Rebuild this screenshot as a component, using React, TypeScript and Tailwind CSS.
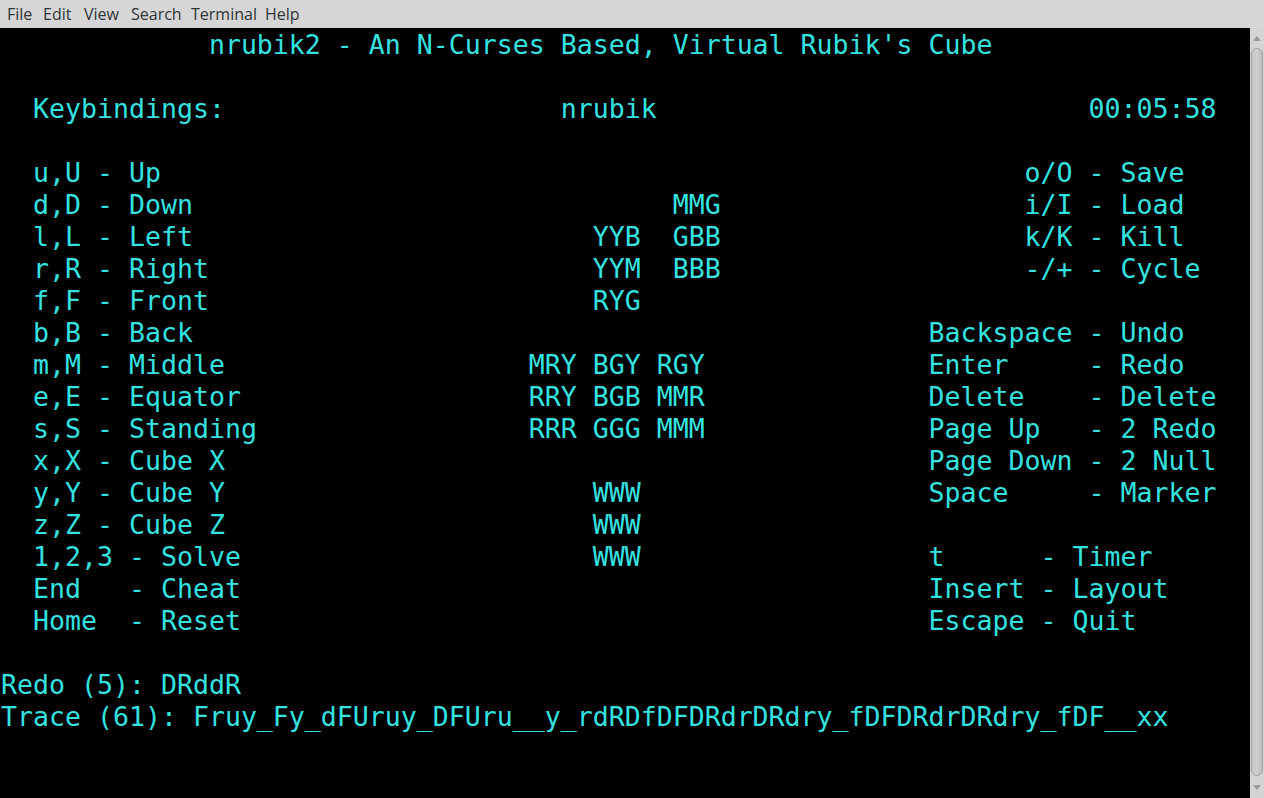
import React from "react";

function pad(s: string, col: number) {
  return s.length >= col ? s : s + " ".repeat(col - s.length);
}

type Seg = [number, string];
function line(...segs: Seg[]) {
  let s = "";
  for (const [c, t] of segs) {
    s = pad(s, c) + t;
  }
  return s;
}

const lines: string[] = [
  line([13, "nrubik2 - An N-Curses Based, Virtual Rubik's Cube"]),
  "",
  line([2, "Keybindings:"], [35, "nrubik"], [68, "00:05:58"]),
  "",
  line([2, "u,U - Up"], [64, "o/O - Save"]),
  line([2, "d,D - Down"], [42, "MMG"], [64, "i/I - Load"]),
  line([2, "l,L - Left"], [37, "YYB  GBB"], [64, "k/K - Kill"]),
  line([2, "r,R - Right"], [37, "YYM  BBB"], [64, "-/+ - Cycle"]),
  line([2, "f,F - Front"], [37, "RYG"]),
  line([2, "b,B - Back"], [58, "Backspace - Undo"]),
  line([2, "m,M - Middle"], [33, "MRY BGY RGY"], [58, "Enter     - Redo"]),
  line([2, "e,E - Equator"], [33, "RRY BGB MMR"], [58, "Delete    - Delete"]),
  line([2, "s,S - Standing"], [33, "RRR GGG MMM"], [58, "Page Up   - 2 Redo"]),
  line([2, "x,X - Cube X"], [58, "Page Down - 2 Null"]),
  line([2, "y,Y - Cube Y"], [37, "WWW"], [58, "Space     - Marker"]),
  line([2, "z,Z - Cube Z"], [37, "WWW"]),
  line([2, "1,2,3 - Solve"], [37, "WWW"], [58, "t      - Timer"]),
  line([2, "End   - Cheat"], [58, "Insert - Layout"]),
  line([2, "Home  - Reset"], [58, "Escape - Quit"]),
  "",
  "Redo (5): DRddR",
  "Trace (61): Fruy_Fy_dFUruy_DFUru__y_rdRDfDFDRdrDRdry_fDFDRdrDRdry_fDF__xx",
];

const menus: [string, string][] = [
  ["File", "w-[36px]"],
  ["Edit", "w-[41px]"],
  ["View", "w-[47px]"],
  ["Search", "w-[60px]"],
  ["Terminal", "w-[74px]"],
  ["Help", "w-[40px]"],
];

export default function App() {
  return (
    <div className="w-[1264px] h-[798px] flex flex-col overflow-hidden bg-black">
      <div
        className="h-[28px] bg-[#d6d6d6] flex items-center pl-[7px] text-[16px] text-[#2e3436]"
        style={{ fontFamily: '"Open Sans", "Noto Sans", sans-serif' }}
      >
        {menus.map(([m, w]) => (
          <span key={m} className={w}>
            {m}
          </span>
        ))}
      </div>
      <div className="flex flex-1 min-h-0">
        <pre
          className="flex-1 m-0 pl-[1px] pt-[1px] text-[26.576px] leading-[32px] text-[#34e2e2] whitespace-pre overflow-hidden"
          style={{ fontFamily: '"DejaVu Sans Mono", monospace' }}
        >
          {lines.join("\n")}
        </pre>
        <div className="w-[14px] bg-[#d4d4d4] flex flex-col items-center">
          <div className="h-[20px] flex items-center justify-center">
            <svg width="8" height="5" viewBox="0 0 8 5">
              <path d="M4 0 L8 5 L0 5 Z" fill="#9a9a9a" />
            </svg>
          </div>
          <div className="flex-1 w-[12px] rounded-[6px] bg-gradient-to-r from-[#c6c6c6] via-[#d0d0d0] to-[#bcbcbc] border border-[#a4a4a4]" />
          <div className="h-[22px] flex items-center justify-center">
            <svg width="8" height="5" viewBox="0 0 8 5">
              <path d="M0 0 L8 0 L4 5 Z" fill="#9a9a9a" />
            </svg>
          </div>
        </div>
      </div>
    </div>
  );
}
